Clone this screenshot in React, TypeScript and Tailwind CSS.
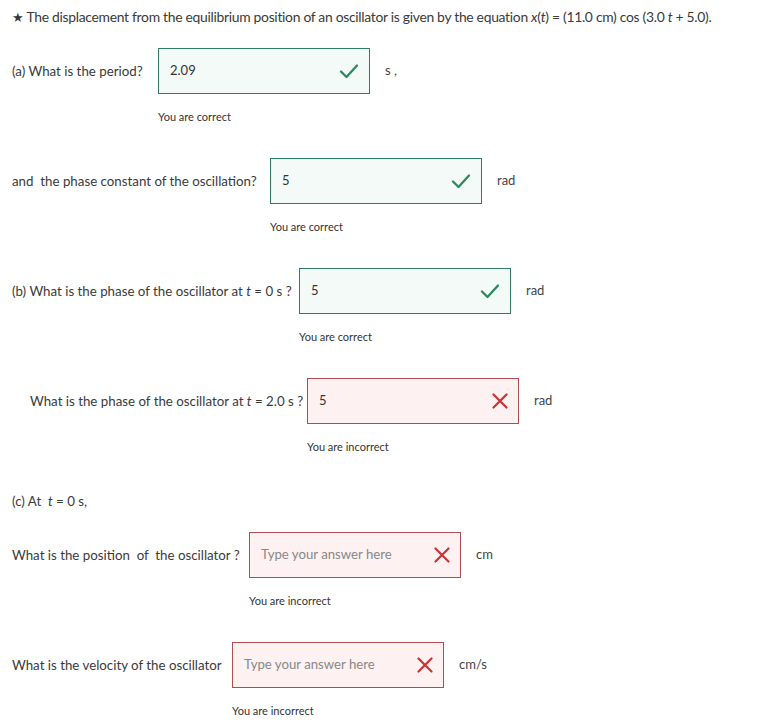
import React from "react";

const Check = () => (
  <svg width="20" height="16" viewBox="0 0 20 16" fill="none">
    <path d="M2 8.5 L7.5 14 L18 2.5" stroke="#2a8a5c" strokeWidth="2.3" strokeLinecap="round" strokeLinejoin="round" />
  </svg>
);

const Cross = () => (
  <svg width="16" height="16" viewBox="0 0 16 16" fill="none">
    <path d="M1.5 1.5 L14.5 14.5 M14.5 1.5 L1.5 14.5" stroke="#c93434" strokeWidth="2.2" strokeLinecap="round" />
  </svg>
);

type RowProps = {
  label: React.ReactNode;
  labelW: string;
  value?: string;
  ok: boolean;
  unit: string;
  indent?: boolean;
  mt: string;
};

function Row({ label, labelW, value, ok, unit, indent, mt }: RowProps) {
  return (
    <div className={mt}>
      <div className="flex items-center">
        <div className={`${labelW} ${indent ? "pl-[18px]" : ""} shrink-0 whitespace-nowrap pt-[2px] text-[13.3px] text-[#3a3a3a]`}>{label}</div>
        <div
          className={`flex h-[46px] w-[212px] shrink-0 items-center justify-between border pl-[11px] ${
            ok ? "border-[#2d7d5f] bg-[#f3faf7] pr-[10px]" : "border-[#b04c4f] bg-[#fdf1f2] pr-[10px]"
          }`}
        >
          {value ? (
            <span className="text-[13px] text-[#333]">{value}</span>
          ) : (
            <span className="text-[13.2px] text-[#888]">Type your answer here</span>
          )}
          {ok ? <Check /> : <Cross />}
        </div>
        <div className="ml-[15px] text-[13px] text-[#444]">{unit}</div>
      </div>
      <div className="flex">
        <div className={`${labelW} shrink-0`} />
        <div className="mt-[15px] text-[11px] leading-[16px] text-[#333]">{ok ? "You are correct" : "You are incorrect"}</div>
      </div>
    </div>
  );
}

export default function App() {
  return (
    <div className="min-h-[726px] bg-white pl-[12px] pt-[7px] text-[#3a3a3a]" style={{ fontFamily: "Lato, 'Noto Sans', sans-serif" }}>
      <div className="text-[13.9px] leading-[20px] tracking-[-0.3px]">
        <span className="text-[13px]">★</span> The displacement from the equilibrium position of an oscillator is given by the equation <i>x</i>(<i>t</i>) = (11.0 cm) cos (3.0 <i>t</i> + 5.0).
      </div>

      <Row mt="mt-[21px]" labelW="w-[146px]" label="(a) What is the period?" value="2.09" ok unit="s ," />
      <Row mt="mt-[33px]" labelW="w-[258px]" label={<>and&nbsp; the phase constant of the oscillation?</>} value="5" ok unit="rad" />
      <Row
        mt="mt-[33px]"
        labelW="w-[287px]"
        label={<>(b) What is the phase of the oscillator at <i>t</i> = 0 s ?</>}
        value="5"
        ok
        unit="rad"
      />
      <Row
        mt="mt-[33px]"
        labelW="w-[295px]"
        indent
        label={<>What is the phase of the oscillator at <i>t</i> = 2.0 s ?</>}
        value="5"
        ok={false}
        unit="rad"
      />

      <div className="mt-[36px] text-[13.3px] leading-[20px]">
        (c) At &nbsp;<i>t</i> = 0 s,
      </div>

      <Row mt="mt-[21px]" labelW="w-[237px]" label={<>What is the position&nbsp; of&nbsp; the oscillator ?</>} ok={false} unit="cm" />
      <Row mt="mt-[33px]" labelW="w-[220px]" label="What is the velocity of the oscillator" ok={false} unit="cm/s" />
    </div>
  );
}
